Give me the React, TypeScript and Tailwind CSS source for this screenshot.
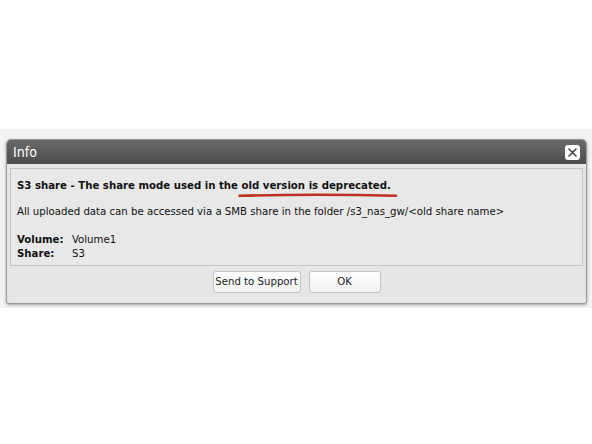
import React from "react";

export default function App() {
  return (
    <div className="w-[592px] h-[444px] bg-white relative overflow-hidden" style={{ fontFamily: '"DejaVu Sans Condensed", "DejaVu Sans", Verdana, sans-serif' }}>
      <div className="h-[129px]" />
      <div className="h-[179px] bg-[#f2f2f2] pt-[10px] px-[6px]">
        <div className="w-[581px] h-[165px] rounded-t-[5px] rounded-b-[3px] border border-[#9a9a9a] bg-[#e6e6e6] shadow-[0_1px_3px_rgba(0,0,0,0.35)] flex flex-col">
          <div className="h-[24px] rounded-t-[4px] bg-gradient-to-b from-[#6a6a6a] to-[#4c4c4c] flex items-center justify-between pl-[6px] pr-[6px]">
            <span className="text-white text-[14px] leading-none">Info</span>
            <div className="w-[15px] h-[15px] rounded-[3px] bg-white flex items-center justify-center">
              <svg width="9" height="9" viewBox="0 0 9 9">
                <path d="M1 1L8 8M8 1L1 8" stroke="#444" strokeWidth="1.6" strokeLinecap="round" />
              </svg>
            </div>
          </div>
          <div className="mx-[3px] mt-[4px] h-[98px] border border-[#c4c4c4] bg-[#e8e8e8] px-[6px] pt-[10px] text-[11.3px] text-[#111]">
            <div className="font-bold leading-[14px] whitespace-nowrap">
              S3 share - The share mode used in the{" "}
              <span className="relative">
                old version is deprecated.
                <svg className="absolute left-[-4px] top-[13px]" width="160" height="6" viewBox="0 0 160 6">
                  <path d="M1.5 3.8 Q80 1.6 158 3.8" stroke="#b8321f" strokeWidth="2.6" fill="none" strokeLinecap="round" />
                </svg>
              </span>
            </div>
            <div className="mt-[12px] leading-[14px] whitespace-nowrap">All uploaded data can be accessed via a SMB share in the folder /s3_nas_gw/&lt;old share name&gt;</div>
            <div className="mt-[14px] leading-[14px] flex">
              <span className="font-bold w-[55px]">Volume:</span>
              <span>Volume1</span>
            </div>
            <div className="leading-[14px] flex">
              <span className="font-bold w-[55px]">Share:</span>
              <span>S3</span>
            </div>
          </div>
          <div className="flex justify-center gap-[8px] mt-[5px]">
            <button className="w-[88px] h-[22px] whitespace-nowrap rounded-[3px] border border-[#c4c4c4] bg-gradient-to-b from-[#ffffff] to-[#f0f0f0] text-[11.3px] text-[#222]">Send to Support</button>
            <button className="w-[72px] h-[22px] rounded-[3px] border border-[#c4c4c4] bg-gradient-to-b from-[#ffffff] to-[#f0f0f0] text-[11.3px] text-[#222]">OK</button>
          </div>
        </div>
      </div>
    </div>
  );
}
